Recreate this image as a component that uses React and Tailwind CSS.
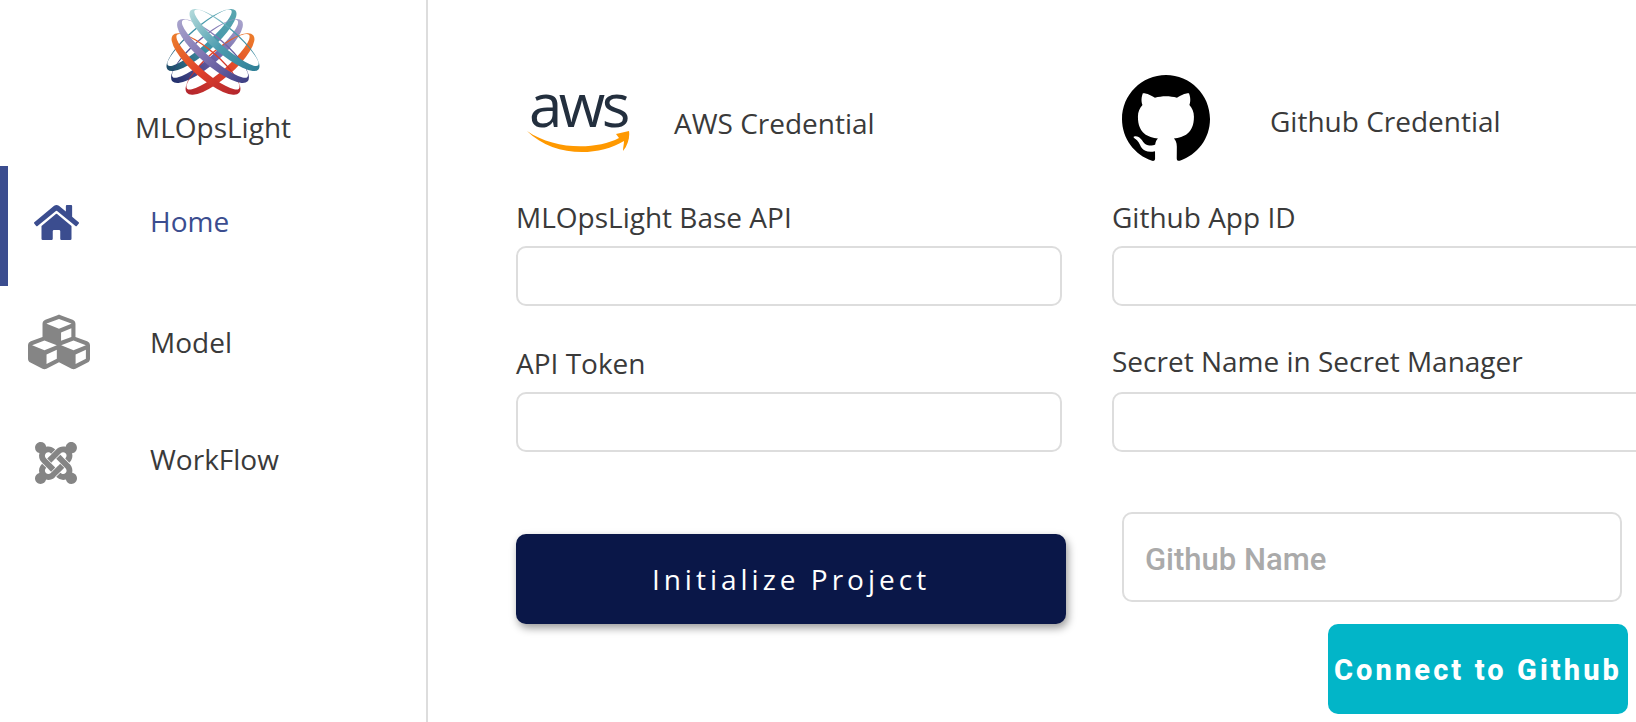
import React from 'react';
import { FaHome, FaCubes, FaJoomla } from 'react-icons/fa';
import { SiGithub } from 'react-icons/si';

const ribbons = [
  { id: 'r1', cx: 36.5, cy: 35, a: -41, rx: 45, ry: 13, stops: ['#5aa6b0', '#3f93a8', '#1d4a68'] },
  { id: 'r2', cx: 42, cy: 46, a: -41, rx: 46, ry: 14, stops: ['#a8a3cc', '#6a5fa5', '#22306c'] },
  { id: 'r3', cx: 55, cy: 59, a: -41, rx: 44, ry: 14, stops: ['#ec7c2b', '#e0402a', '#b3262e'] },
  { id: 'r4', cx: 41, cy: 59, a: 41, rx: 44, ry: 14, stops: ['#ec7c2b', '#e0402a', '#b3262e'] },
  { id: 'r5', cx: 48, cy: 46, a: 41, rx: 46, ry: 14, stops: ['#a8a3cc', '#7a6fae', '#3d3f83'] },
  { id: 'r6', cx: 59.5, cy: 35, a: 41, rx: 45, ry: 13, stops: ['#b3dadb', '#4e9db0', '#2f7f96'] },
];

// outer ellipse with an inner one pushed up, so the band is thick on the lower long side only
const ribbonPath = (rx, ry) => {
  const ix = rx - 3;
  const iy = ry - 4.5;
  const oy = -3;
  return (
    `M${-rx} 0A${rx} ${ry} 0 1 0 ${rx} 0A${rx} ${ry} 0 1 0 ${-rx} 0Z` +
    `M${-ix} ${oy}A${ix} ${iy} 0 1 1 ${ix} ${oy}A${ix} ${iy} 0 1 1 ${-ix} ${oy}Z`
  );
};

const Logo = () => (
  <svg viewBox="0 0 97 91" className="h-[91px] w-[97px]">
    <defs>
      {ribbons.map((r) => (
        <linearGradient key={r.id} id={r.id} x1={r.a > 0 ? '0' : '1'} x2={r.a > 0 ? '1' : '0'} y1="0" y2="0">
          <stop offset="0" stopColor={r.stops[0]} />
          <stop offset="0.5" stopColor={r.stops[1]} />
          <stop offset="1" stopColor={r.stops[2]} />
        </linearGradient>
      ))}
    </defs>
    {ribbons.map((r) => (
      <path
        key={r.id}
        d={ribbonPath(r.rx, r.ry)}
        fill={`url(#${r.id})`}
        fillRule="evenodd"
        transform={`translate(${r.cx} ${r.cy}) rotate(${r.a})`}
      />
    ))}
  </svg>
);

const AwsLogo = () => (
  <div className="ml-[2px] flex w-[104px] flex-col items-center pb-[10px]">
    <span className="font-['Open_Sans',sans-serif] text-[60px] leading-[44px] font-medium tracking-[-3.5px] text-[#232f3e]">aws</span>
    <svg viewBox="0 0 104 28" className="h-[28px] w-[104px]">
      <path d="M1 5C28 24 70 24 93 12L90 8L103 5C104 11 102 19 97 25C97 21 98 18 98 15C70 32 26 30 1 5Z" fill="#f90" />
    </svg>
  </div>
);

const navItems = [
  { label: 'Home', icon: <FaHome size={45} />, active: true, rowClass: 'h-[120px] pb-[10px]', iconClass: 'pr-[46px] pt-[2px] text-[#3b4d8f]' },
  { label: 'Model', icon: <FaCubes size={62} />, rowClass: 'h-[119px] pb-[8px]', iconClass: 'pr-[40px] text-[#858585]' },
  { label: 'WorkFlow', icon: <FaJoomla size={48} />, rowClass: 'h-[116px] pb-[8px]', iconClass: 'pr-[46px] pt-[8px] text-[#858585]' },
];

const Field = ({ label, labelClass = 'pb-[11px]', inputClass }) => (
  <div className="flex flex-col">
    <label className={`text-[28px] leading-[36px] text-[#3a3a3a] ${labelClass}`}>{label}</label>
    <input className={`h-[60px] rounded-[10px] border-2 border-[#dddddd] bg-white outline-none ${inputClass}`} />
  </div>
);

export default function App() {
  return (
    <div className="flex h-screen w-full overflow-hidden bg-white font-['Open_Sans',sans-serif]">
      <aside className="flex w-[428px] shrink-0 flex-col border-r-2 border-[#dddddd]">
        <div className="flex flex-col items-center pt-[5px]">
          <Logo />
          <span className="mt-[13px] text-[28px] leading-[36px] text-[#3a3a3a]">MLOpsLight</span>
        </div>
        <nav className="mt-[21px] flex flex-col">
          {navItems.map((item) => (
            <div
              key={item.label}
              className={`flex items-center border-l-8 ${item.rowClass} ${item.active ? 'border-[#3b4d8f]' : 'border-transparent'}`}
            >
              <span className={`flex w-[142px] justify-center ${item.iconClass}`}>{item.icon}</span>
              <span className={`text-[28px] leading-[36px] ${item.active ? 'text-[#3b4d8f]' : 'text-[#3a3a3a]'}`}>{item.label}</span>
            </div>
          ))}
        </nav>
      </aside>

      <main className="flex min-w-0 flex-1 pl-[88px]">
        <section className="flex w-[550px] shrink-0 flex-col">
          <div className="mt-[86px] flex h-[74px] items-center pl-[8px]">
            <AwsLogo />
            <span className="ml-[44px] text-[28px] leading-[36px] text-[#3a3a3a]">AWS Credential</span>
          </div>
          <div className="mt-[39px] flex w-[546px] flex-col gap-[39px]">
            <Field label="MLOpsLight Base API" inputClass="w-[546px]" />
            <Field label="API Token" inputClass="w-[546px]" />
          </div>
          <button className="mt-[82px] h-[90px] w-[550px] rounded-[10px] bg-[#0a1748] text-[28px] tracking-[4px] text-white shadow-[2px_4px_8px_rgba(0,0,0,0.4)]">
            Initialize Project
          </button>
        </section>

        <section className="ml-[46px] flex w-[600px] shrink-0 flex-col">
          <div className="mt-[74px] flex h-[88px] items-center pl-[10px]">
            <SiGithub size={88} className="text-black" />
            <span className="ml-[60px] pt-[6px] text-[28px] leading-[36px] text-[#3a3a3a]">Github Credential</span>
          </div>
          <div className="mt-[37px] flex flex-col gap-[37px]">
            <Field label="Github App ID" inputClass="w-[600px]" />
            <Field label="Secret Name in Secret Manager" labelClass="pb-[13px]" inputClass="w-[600px]" />
          </div>
          <input
            placeholder="Github Name"
            className="mt-[60px] ml-[10px] h-[90px] w-[500px] rounded-[10px] border-2 border-[#dddddd] bg-white px-[21px] pt-[4px] font-['Roboto',sans-serif] text-[31px] font-medium outline-none placeholder:text-[#aaaaaa]"
          />
          <button className="mt-[22px] ml-[216px] h-[90px] w-[300px] rounded-[10px] bg-[#02b5c8] pt-[4px] font-['Roboto',sans-serif] text-[29px] font-extrabold tracking-[3.1px] whitespace-nowrap text-white">
            Connect to Github
          </button>
        </section>
      </main>
    </div>
  );
}
